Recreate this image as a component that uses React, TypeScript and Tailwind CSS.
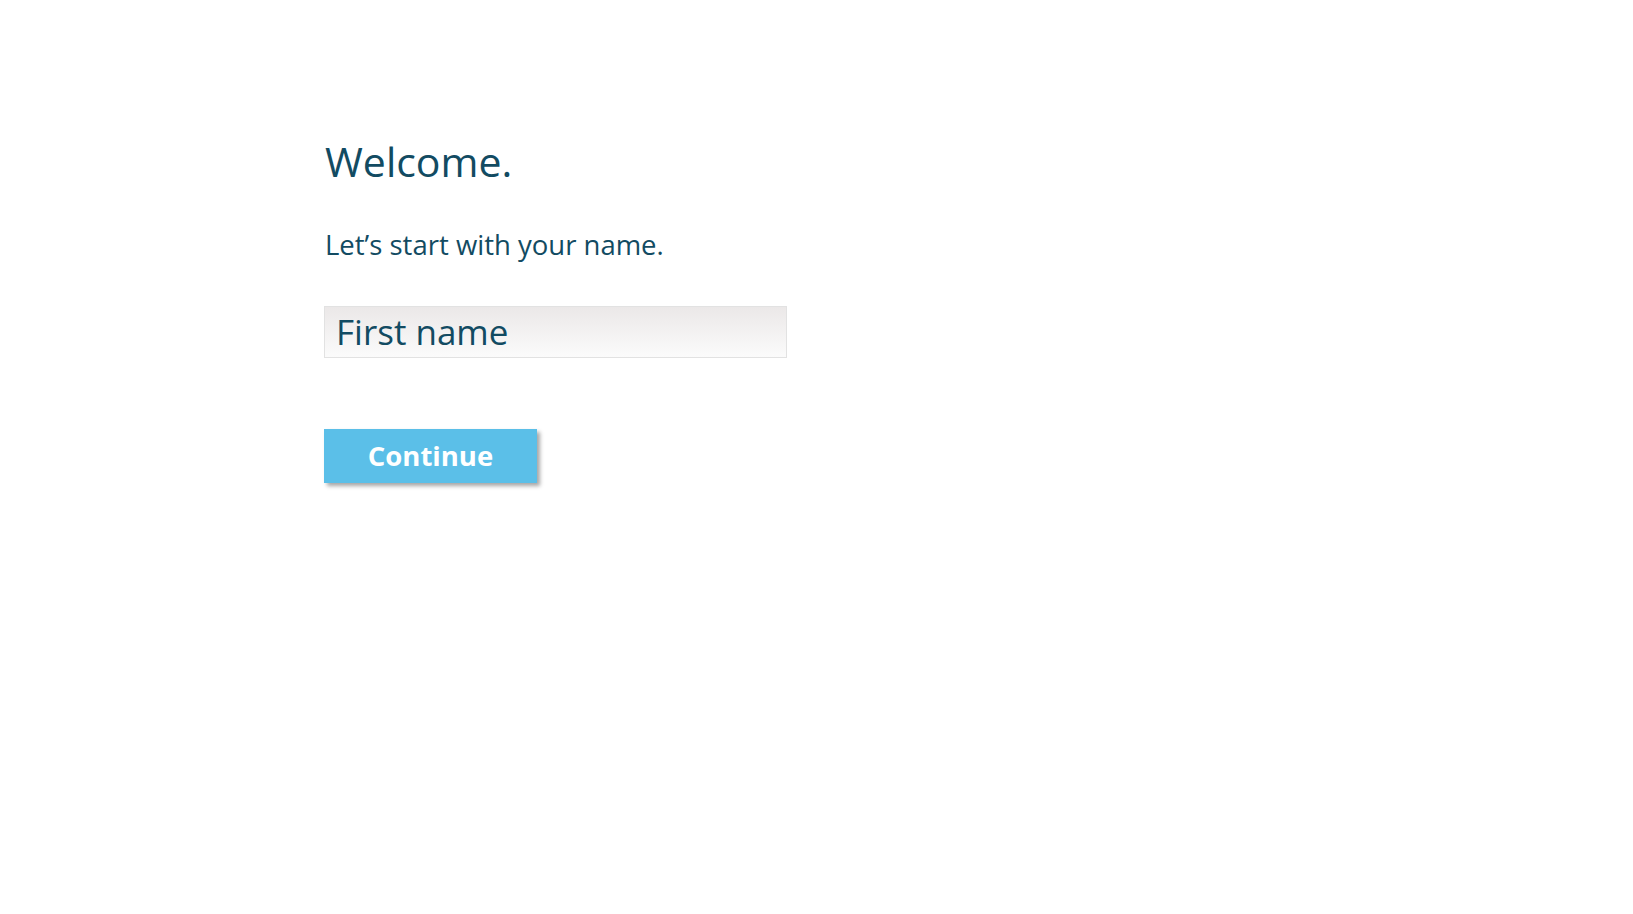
import React from "react";

export default function App() {
  return (
    <div className="min-h-screen w-full bg-white" style={{ fontFamily: '"Open Sans", sans-serif' }}>
      <div className="pl-[325px] pt-[133px] flex flex-col items-start">
        <h1 className="text-[41px] leading-[56px] text-[#124b62] font-normal">Welcome.</h1>
        <p className="mt-[38px] text-[27.5px] leading-[36px] text-[#124b62]">Let’s start with your name.</p>
        <div className="mt-[43px] -ml-[1px] w-[463px] h-[52px] border border-[#e2e2e2] bg-gradient-to-b from-[#ebe8e8] to-[#fbfbfb] flex items-center pl-[11px]">
          <span className="text-[35px] leading-[48px] text-[#124b62]">First name</span>
        </div>
        <button className="mt-[71px] -ml-[1px] w-[213px] h-[54px] bg-[#5bbfe8] text-white font-bold text-[27.5px] shadow-[3px_3px_4px_rgba(0,0,0,0.35)] flex items-center justify-center">
          Continue
        </button>
      </div>
    </div>
  );
}
